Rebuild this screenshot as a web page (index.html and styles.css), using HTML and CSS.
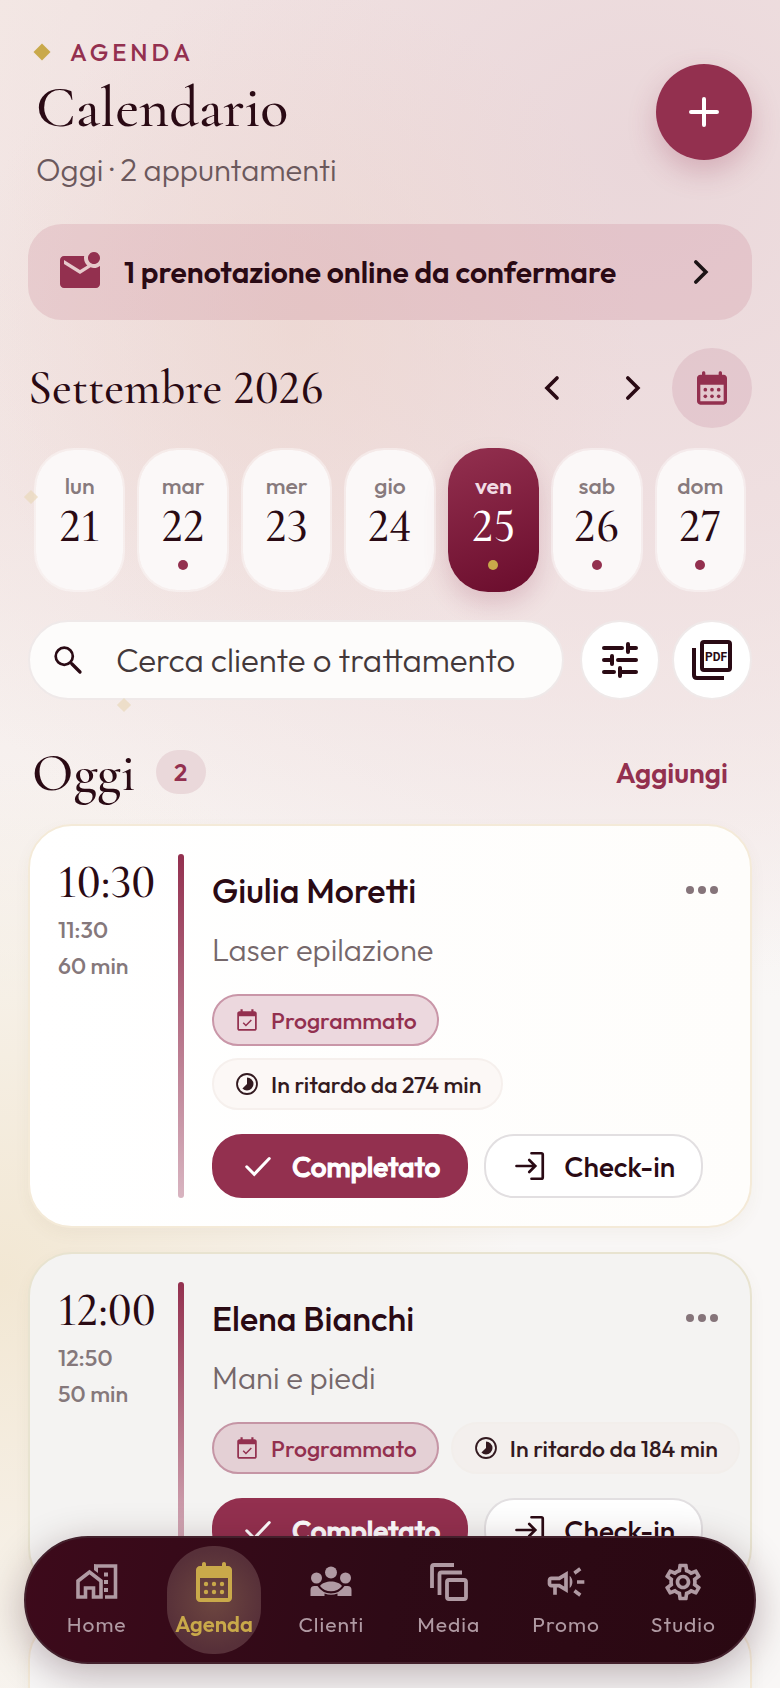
FILE: index.html
```html
<!DOCTYPE html>
<html lang="it">
<head>
<meta charset="utf-8">
<meta name="viewport" content="width=device-width, initial-scale=1.0">
<title>Calendario</title>
<link rel="stylesheet" href="styles.css">
</head>
<body>
<svg class="sprite" aria-hidden="true">
    <symbol id="i-calendar" viewBox="0 0 24 24">
        <path fill-rule="evenodd" d="M19 4h-1V3c0-.6-.4-1-1-1s-1 .4-1 1v1H8V3c0-.6-.4-1-1-1s-1 .4-1 1v1H5c-1.100 0-2 .9-2 2v14c0 1.100.9 2 2 2h14c1.100 0 2-.9 2-2V6c0-1.100-.9-2-2-2zm0 16H5V10h14z"/>
        <circle cx="8" cy="13" r="1.100"/><circle cx="12" cy="13" r="1.100"/><circle cx="16" cy="13" r="1.100"/>
        <circle cx="8" cy="17" r="1.100"/><circle cx="12" cy="17" r="1.100"/><circle cx="16" cy="17" r="1.100"/>
    </symbol>
    <symbol id="i-event" viewBox="0 0 24 24">
        <path fill-rule="evenodd" d="M19 4h-1V2h-2v2H8V2H6v2H5c-1.100 0-2 .9-2 2v14c0 1.100.9 2 2 2h14c1.100 0 2-.9 2-2V6c0-1.100-.9-2-2-2zm.4 16.400H4.600V8.500h14.800z"/>
        <path d="M8.500 14.500l2.500 2.500 5-5" fill="none" stroke="currentColor" stroke-width="1.400"/>
    </symbol>
    <symbol id="i-late" viewBox="0 0 24 24">
        <path d="M16.240 7.760A5.970 5.970 0 0 0 12 6v6l-4.240 4.240c2.340 2.340 6.140 2.340 8.490 0a5.990 5.990 0 0 0-.01-8.480z"/>
        <circle cx="12" cy="12" r="9.200" fill="none" stroke="currentColor" stroke-width="1.700"/>
    </symbol>
    <symbol id="i-check" viewBox="0 0 24 24">
        <path d="M4.500 12.500l5 5L19.500 7" fill="none" stroke="currentColor" stroke-width="2" stroke-linecap="round"/>
    </symbol>
    <symbol id="i-login" viewBox="0 0 24 24">
        <path d="M13 3.500h6.500q1 0 1 1v15q0 1-1 1H13M3 12h12M11.500 8l4 4-4 4" fill="none" stroke="currentColor" stroke-width="1.800" stroke-linecap="round"/>
    </symbol>
    <symbol id="i-left" viewBox="0 0 24 24">
        <path d="M15 6l-6 6 6 6" fill="none" stroke="currentColor" stroke-width="2.200" stroke-linecap="round"/>
    </symbol>
    <symbol id="i-right" viewBox="0 0 24 24">
        <path d="M9.500 6l6 6-6 6" fill="none" stroke="currentColor" stroke-width="2.200" stroke-linecap="round"/>
    </symbol>
    <symbol id="i-more" viewBox="0 0 32 32">
        <circle cx="4" cy="16" r="4"/><circle cx="16" cy="16" r="4"/><circle cx="28" cy="16" r="4"/>
    </symbol>
</svg>

<main class="app">
    <span class="spark spark-a"></span>
    <span class="spark spark-b"></span>

    <header class="header">
        <div class="heading">
            <p class="eyebrow"><span class="diamond"></span>AGENDA</p>
            <h1>Calendario</h1>
            <p class="subtitle">Oggi · 2 appuntamenti</p>
        </div>
        <button class="fab" aria-label="Nuovo appuntamento">
            <svg viewBox="0 0 32 32"><path d="M16 3v26M3 16h26" stroke="currentColor" stroke-width="4" stroke-linecap="round"/></svg>
        </button>
    </header>

    <button class="banner">
        <svg class="icon-lg" viewBox="0 0 24 24"><path d="M22 8.980V18c0 1.100-.9 2-2 2H4c-1.100 0-2-.9-2-2V6c0-1.100.9-2 2-2h10.100c-.06.320-.1.660-.1 1 0 1.480.650 2.790 1.670 3.710L12 11 4 6v2l8 5 5.300-3.320c.540.200 1.100.320 1.700.320 1.130 0 2.160-.390 3-1.020zM16 5c0 1.660 1.340 3 3 3s3-1.340 3-3-1.340-3-3-3-3 1.340-3 3z"/></svg>
        <span class="banner-text">1 prenotazione online da confermare</span>
        <svg class="icon-md dark"><use href="#i-right"/></svg>
    </button>

    <div class="month">
        <h2>Settembre 2026</h2>
        <button class="arrow" aria-label="Settimana precedente"><svg class="icon-md"><use href="#i-left"/></svg></button>
        <button class="arrow" aria-label="Settimana successiva"><svg class="icon-md"><use href="#i-right"/></svg></button>
        <button class="pick" aria-label="Scegli data"><svg class="icon-md"><use href="#i-calendar"/></svg></button>
    </div>

    <div class="days">
        <button class="day"><span>lun</span><b>21</b></button>
        <button class="day busy"><span>mar</span><b>22</b></button>
        <button class="day"><span>mer</span><b>23</b></button>
        <button class="day"><span>gio</span><b>24</b></button>
        <button class="day busy active"><span>ven</span><b>25</b></button>
        <button class="day busy"><span>sab</span><b>26</b></button>
        <button class="day busy"><span>dom</span><b>27</b></button>
    </div>

    <div class="tools">
        <label class="search">
            <svg class="icon-sm" viewBox="0 0 24 24"><path d="M14.500 14.500L20 20" stroke="currentColor" stroke-width="2.200" stroke-linecap="round"/><circle cx="9.500" cy="9.500" r="5.700" fill="none" stroke="currentColor" stroke-width="1.800"/></svg>
            <input type="search" placeholder="Cerca cliente o trattamento" aria-label="Cerca cliente o trattamento">
        </label>
        <button class="round" aria-label="Filtri">
            <svg class="icon-lg" viewBox="0 0 24 24"><path d="M4 6h9M17 6h3M16 4v4M4 12h3M8 10v4M11 12h9M4 18h5M12 16v4M13 18h7" fill="none" stroke="currentColor" stroke-width="2" stroke-linecap="round"/></svg>
        </button>
        <button class="round" aria-label="Esporta PDF">
            <svg class="icon-lg" viewBox="0 0 24 24"><path d="M3 6v13.500q0 1.500 1.500 1.500H18" fill="none" stroke="currentColor" stroke-width="2"/><rect x="7" y="3" width="14" height="14" rx="1" fill="none" stroke="currentColor" stroke-width="2"/><text x="14" y="12.400" text-anchor="middle" class="pdf">PDF</text></svg>
        </button>
    </div>

    <div class="section">
        <h2>Oggi</h2>
        <span class="count">2</span>
        <button class="add">Aggiungi</button>
    </div>

    <article class="card">
        <div class="time">
            <strong>10:30</strong>
            <span>11:30</span>
            <span>60 min</span>
        </div>
        <div class="rail"></div>
        <div class="info">
            <div class="name">
                <h3>Giulia Moretti</h3>
                <button class="more" aria-label="Altre azioni"><svg><use href="#i-more"/></svg></button>
            </div>
            <p class="service">Laser epilazione</p>
            <div class="chips stacked">
                <span class="chip status"><svg><use href="#i-event"/></svg>Programmato</span>
                <span class="chip"><svg><use href="#i-late"/></svg>In ritardo da 274 min</span>
            </div>
            <div class="actions">
                <button class="btn primary"><svg><use href="#i-check"/></svg>Completato</button>
                <button class="btn"><svg><use href="#i-login"/></svg>Check-in</button>
            </div>
        </div>
    </article>

    <article class="card muted">
        <div class="time">
            <strong>12:00</strong>
            <span>12:50</span>
            <span>50 min</span>
        </div>
        <div class="rail"></div>
        <div class="info">
            <div class="name">
                <h3>Elena Bianchi</h3>
                <button class="more" aria-label="Altre azioni"><svg><use href="#i-more"/></svg></button>
            </div>
            <p class="service">Mani e piedi</p>
            <div class="chips">
                <span class="chip status"><svg><use href="#i-event"/></svg>Programmato</span>
                <span class="chip"><svg><use href="#i-late"/></svg>In ritardo da 184 min</span>
            </div>
            <div class="actions">
                <button class="btn primary"><svg><use href="#i-check"/></svg>Completato</button>
                <button class="btn"><svg><use href="#i-login"/></svg>Check-in</button>
            </div>
        </div>
    </article>

    <article class="card empty"></article>
</main>

<nav class="nav">
    <a href="#home">
        <svg viewBox="0 0 44 44"><path d="M3 37V21l11.500-9L26 21v16h-7.500v-9h-8v9zM19 6h21.500v31H30" fill="none" stroke="currentColor" stroke-width="3.600"/><path d="M19 4v6l4 3V6zM29 12.500h4v4h-4zM29 20h4v4h-4zM29 28h4v4h-4z"/></svg>
        Home
    </a>
    <a href="#agenda" class="active">
        <svg><use href="#i-calendar"/></svg>
        Agenda
    </a>
    <a href="#clienti">
        <svg viewBox="0 0 44 44"><circle cx="22" cy="12.500" r="6"/><circle cx="7.500" cy="18" r="5.500"/><circle cx="36.500" cy="18" r="5.500"/><path d="M11 26C15 20 29 20 33 26C28 33 16 33 11 26zM1.500 36v-6q0-4 4-4h3q5 7.500 13.500 7.500T35.500 26h3q4 0 4 4v6H28.500v-2.500q-6.500 2.500-13 0V36z"/></svg>
        Clienti
    </a>
    <a href="#media">
        <svg viewBox="0 0 44 44"><path d="M5 28V7q0-2 2-2h20M12.500 35V14.500q0-2 2-2H35" fill="none" stroke="currentColor" stroke-width="3.800"/><rect x="20" y="20" width="19" height="19" rx="2" fill="none" stroke="currentColor" stroke-width="3.800"/></svg>
        Media
    </a>
    <a href="#promo">
        <svg viewBox="0 0 24 24"><path d="M18 11v2h4v-2h-4zM16 17.610c.96.710 2.210 1.650 3.200 2.390.4-.530.8-1.070 1.200-1.600-.99-.740-2.240-1.680-3.200-2.400-.4.540-.8 1.080-1.200 1.610zM20.400 5.600c-.4-.530-.8-1.070-1.200-1.600-.99.740-2.240 1.680-3.200 2.400.4.530.8 1.070 1.200 1.600.96-.720 2.210-1.650 3.200-2.400zM4 9c-1.100 0-2 .9-2 2v2c0 1.100.9 2 2 2h1v4h2v-4h1l5 3V6L8 9H4zm5.030 1.710L11 9.530v4.940l-1.970-1.180-.48-.29H4v-2h4.550l.48-.29zM15.500 12c0-1.330-.58-2.530-1.500-3.350v6.690c.92-.81 1.500-2.010 1.500-3.340z"/></svg>
        Promo
    </a>
    <a href="#studio">
        <svg viewBox="0 0 24 24"><path d="M19.430 12.980c.04-.32.07-.64.07-.98 0-.34-.03-.66-.07-.98l2.110-1.650c.19-.15.24-.42.12-.64l-2-3.460c-.09-.16-.26-.25-.44-.25-.06 0-.12.010-.17.030l-2.490 1c-.52-.4-1.080-.73-1.690-.98l-.38-2.650C14.460 2.180 14.250 2 14 2h-4c-.25 0-.46.18-.49.42l-.38 2.650c-.61.25-1.170.59-1.690.98l-2.490-1c-.06-.02-.12-.03-.18-.03-.17 0-.34.09-.43.25l-2 3.460c-.13.22-.07.49.12.64l2.110 1.650c-.04.32-.07.65-.07.98 0 .33.03.66.07.98l-2.110 1.650c-.19.15-.24.42-.12.64l2 3.460c.09.16.26.25.44.25.06 0 .12-.01.17-.03l2.490-1c.52.4 1.080.73 1.690.98l.38 2.650c.03.24.24.42.49.42h4c.25 0 .46-.18.49-.42l.38-2.650c.61-.25 1.170-.59 1.690-.98l2.490 1c.06.02.12.03.18.03.17 0 .34-.09.43-.25l2-3.460c.12-.22.07-.49-.12-.64l-2.110-1.650zm-1.980-1.710c.04.31.05.52.05.73 0 .21-.02.43-.05.73l-.14 1.130.89.7 1.080.84-.7 1.210-1.270-.51-1.040-.42-.9.68c-.43.32-.84.56-1.250.73l-1.060.43-.16 1.130-.2 1.350h-1.400l-.19-1.350-.16-1.130-1.060-.43c-.43-.18-.83-.41-1.230-.71l-.91-.7-1.060.43-1.270.51-.7-1.210 1.080-.84.89-.7-.14-1.130c-.03-.31-.05-.54-.05-.74s.02-.43.05-.73l.14-1.130-.89-.7-1.080-.84.7-1.210 1.270.51 1.040.42.9-.68c.43-.32.84-.56 1.250-.73l1.060-.43.16-1.130.2-1.350h1.390l.19 1.350.16 1.130 1.060.43c.43.18.83.41 1.230.71l.91.7 1.060-.43 1.270-.51.7 1.210-1.070.85-.89.7.14 1.130zM12 8c-2.210 0-4 1.790-4 4s1.790 4 4 4 4-1.790 4-4-1.790-4-4-4zm0 6c-1.100 0-2-.9-2-2s.9-2 2-2 2 .9 2 2-.9 2-2 2z"/></svg>
        Studio
    </a>
</nav>
</body>
</html>
```
FILE: styles.css
```css
* {
    box-sizing: border-box;
}
body {
    margin: 0;
    font-family: "Outfit", "Lato", sans-serif;
    color: #2a0a14;
    background:
        radial-gradient(circle at 0 1280px, #f2e7d3 0, rgba(242, 231, 211, 0) 520px),
        radial-gradient(circle at 300px 330px, rgba(236, 212, 204, 0.6) 0, rgba(236, 212, 204, 0) 340px),
        radial-gradient(ellipse 900px 820px at 640px 160px, #ead7da 0, rgba(238, 221, 223, 0.8) 45%, rgba(240, 226, 227, 0) 100%),
        linear-gradient(#f6ede7 0, #f4e9e6 500px, #f9f7f6 1000px);
    background-attachment: fixed;
}
h1, h2, h3, p {
    margin: 0;
}
h1, h2, .day b, .time strong {
    font-family: "Cormorant Garamond", "Liberation Serif", serif;
    font-weight: 500;
    font-variant-numeric: lining-nums;
}
button {
    font: inherit;
    color: inherit;
    border: none;
    background: none;
    padding: 0;
    display: flex;
    align-items: center;
    justify-content: center;
    cursor: pointer;
}
svg {
    display: block;
    flex: none;
    fill: currentColor;
}
.sprite {
    position: absolute;
    width: 0;
    height: 0;
}
.icon-sm {
    width: 36px;
    height: 36px;
}
.icon-md {
    width: 40px;
    height: 40px;
}
.icon-lg {
    width: 48px;
    height: 48px;
}
.app {
    position: relative;
    height: 100vh;
    overflow-x: hidden;
    overflow-y: auto;
    scrollbar-width: none;
    padding: 36px 28px 0;
}

/* header */
.header {
    display: flex;
    align-items: center;
    justify-content: space-between;
    padding-left: 8px;
}
.eyebrow {
    display: flex;
    align-items: center;
    gap: 22px;
    font-size: 24px;
    line-height: 32px;
    font-weight: 500;
    letter-spacing: 4px;
    color: #93304f;
}
.diamond {
    width: 12px;
    height: 12px;
    background: #c9a94a;
    transform: rotate(45deg);
}
h1 {
    margin-top: 8px;
    font-size: 58px;
    line-height: 64px;
}
.subtitle {
    margin-top: 12px;
    font-size: 31px;
    line-height: 36px;
    font-weight: 300;
    color: #6b585c;
}
.fab {
    width: 96px;
    height: 96px;
    border-radius: 50%;
    background: #93304f;
    color: #fff;
    box-shadow: 0 12px 28px rgba(147, 48, 79, 0.25);
}
.fab svg {
    width: 32px;
    height: 32px;
}

/* online bookings */
.banner {
    width: 100%;
    height: 96px;
    margin-top: 36px;
    padding: 0 32px 0 28px;
    gap: 20px;
    border-radius: 34px;
    background: rgba(205, 135, 152, 0.25);
    color: #93304f;
}
.banner-text {
    flex: 1;
    text-align: left;
    font-size: 30px;
    font-weight: 600;
    color: #2a0a14;
}
.dark {
    color: #1c1416;
}

/* month and week */
.month {
    display: flex;
    align-items: center;
    height: 80px;
    margin-top: 28px;
}
.month h2 {
    flex: 1;
    font-size: 48px;
}
.arrow, .pick {
    width: 80px;
    height: 80px;
}
.pick {
    border-radius: 50%;
    background: rgba(200, 140, 158, 0.25);
    color: #93304f;
}
.days {
    display: grid;
    grid-template-columns: repeat(7, 1fr);
    gap: 12px;
    padding: 0 6px;
    margin-top: 20px;
}
.day {
    height: 144px;
    flex-direction: column;
    justify-content: flex-start;
    padding-top: 22px;
    border-radius: 40px;
    border: 2px solid rgba(255, 255, 255, 0.4);
    background: #fbf8f8;
    background-clip: padding-box;
}
.day span {
    font-size: 23px;
    line-height: 28px;
    font-weight: 500;
    color: #877a7d;
}
.day b {
    margin-top: 2px;
    font-size: 48px;
    line-height: 48px;
}
.day.busy::after {
    content: "";
    width: 10px;
    height: 10px;
    margin-top: 10px;
    border-radius: 50%;
    background: #93304f;
}
.day.active {
    border-color: transparent;
    background: linear-gradient(160deg, #93304f, #6a0c2c) border-box;
    color: #fff;
    box-shadow: 0 12px 24px rgba(147, 48, 79, 0.2);
}
.day.active span {
    font-weight: 600;
    color: #f1dce3;
}
.day.active::after {
    background: #c9a94a;
}

/* search */
.tools {
    display: flex;
    gap: 12px;
    margin-top: 28px;
}
.search {
    flex: 1;
    min-width: 0;
    display: flex;
    align-items: center;
    gap: 30px;
    height: 80px;
    margin-right: 4px;
    padding: 0 20px;
    border: 2px solid #efe9e9;
    border-radius: 40px;
    background: #fdfcfb;
}
.search input {
    flex: 1;
    min-width: 0;
    border: none;
    outline: none;
    padding: 0;
    background: none;
    font: inherit;
    font-size: 33px;
    font-weight: 300;
}
.search input::placeholder {
    color: #43383a;
    opacity: 1;
}
.round {
    width: 80px;
    height: 80px;
    border: 2px solid #efe9e9;
    border-radius: 50%;
    background: #fff;
}
.pdf {
    font-family: "Roboto", sans-serif;
    font-size: 6px;
    font-weight: 700;
}

/* section title */
.section {
    display: flex;
    align-items: center;
    height: 64px;
    margin-top: 40px;
    padding: 0 24px 0 4px;
}
.section h2 {
    font-size: 54px;
}
.count {
    margin: 0 auto 0 20px;
    width: 50px;
    line-height: 44px;
    border-radius: 22px;
    background: #ead8da;
    color: #93304f;
    font-size: 24px;
    font-weight: 600;
    text-align: center;
}
.add {
    font-size: 28px;
    font-weight: 600;
    color: #93304f;
}

/* appointments */
.card {
    display: flex;
    margin-top: 20px;
    padding: 28px 8px 28px 28px;
    border: 2px solid #f4ead8;
    border-radius: 44px;
    background: linear-gradient(90deg, #fff, #fefdfb);
    box-shadow: 0 6px 16px rgba(120, 90, 60, 0.05);
}
.card + .card {
    margin-top: 24px;
}
.card.muted {
    border-color: #e8e3d0;
    background: #f4f3f2;
}
.card.empty {
    height: 340px;
    background: #f8f7f7;
}
.time {
    width: 120px;
    display: flex;
    flex-direction: column;
}
.time strong {
    font-size: 48px;
    line-height: 56px;
    margin-bottom: 2px;
}
.time span {
    font-size: 23px;
    line-height: 36px;
    font-weight: 500;
    color: #85787b;
}
.rail {
    width: 6px;
    margin-right: 28px;
    border-radius: 3px;
    background: linear-gradient(#93304f, #d8b4c0);
}
.info {
    flex: 1;
    min-width: 0;
}
.name {
    display: flex;
    align-items: center;
    justify-content: space-between;
    height: 72px;
    padding-right: 16px;
}
h3 {
    font-size: 34px;
    font-weight: 500;
}
.more {
    width: 48px;
    height: 48px;
    color: #85747a;
}
.more svg {
    width: 32px;
    height: 32px;
}
.service {
    margin-top: 6px;
    font-size: 31px;
    line-height: 36px;
    font-weight: 300;
    color: #75676a;
}
.chips {
    display: flex;
    gap: 12px;
    margin-top: 26px;
}
.chips.stacked {
    flex-direction: column;
    align-items: flex-start;
}
.chip {
    display: flex;
    align-items: center;
    gap: 11px;
    height: 52px;
    padding: 0 20px;
    border: 2px solid #f6f0ed;
    border-radius: 26px;
    background: #fcf8f6;
    color: #331a20;
    font-size: 23px;
    font-weight: 500;
    white-space: nowrap;
}
.chip svg {
    width: 26px;
    height: 26px;
}
.chip.status {
    border-color: #c996a8;
    background: #ecd8de;
    color: #93304f;
}
.muted .chip {
    border-color: #f2eeeb;
    background: #f3efed;
}
.muted .chip.status {
    border-color: #c595a5;
    background: #e4d0d5;
}
.actions {
    display: flex;
    gap: 16px;
    margin-top: 24px;
}
.btn {
    height: 64px;
    gap: 16px;
    padding: 0 26px;
    border: 2px solid #e2dfe1;
    border-radius: 30px;
    background: #fff;
    font-size: 28px;
    font-weight: 500;
}
.btn svg {
    width: 36px;
    height: 36px;
}
.btn.primary {
    border-color: #93304f;
    background: #93304f;
    color: #fff;
    -webkit-text-stroke: 1px;
}

/* bottom bar */
.nav {
    position: fixed;
    left: 24px;
    right: 24px;
    bottom: 24px;
    height: 128px;
    display: grid;
    grid-template-columns: repeat(6, 1fr);
    gap: 24px;
    padding: 8px 24px;
    border: 2px solid #43202c;
    border-radius: 64px;
    background: linear-gradient(100deg, #3d0a1b, #2e0a16 50%, #2a0812);
    box-shadow: 0 10px 40px rgba(42, 8, 18, 0.3);
}
.nav a {
    display: flex;
    flex-direction: column;
    align-items: center;
    gap: 6px;
    padding-top: 14px;
    border-radius: 46px;
    color: #b09aa3;
    font-size: 21px;
    line-height: 28px;
    font-weight: 400;
    letter-spacing: 1px;
    text-decoration: none;
}
.nav svg {
    width: 44px;
    height: 44px;
}
.nav a.active {
    gap: 4px;
    padding-top: 12px;
    background: radial-gradient(circle, #6e4740, #573039 70%);
    color: #c9a94a;
    font-size: 22px;
    font-weight: 600;
    letter-spacing: 0;
}
.nav a.active svg {
    width: 48px;
    height: 48px;
}

/* faint background sparkles */
.spark {
    position: absolute;
    width: 10px;
    height: 10px;
    background: #ead9bb;
    transform: rotate(45deg);
    opacity: 0.7;
}
.spark-a {
    left: 26px;
    top: 492px;
}
.spark-b {
    left: 119px;
    top: 700px;
}
```
